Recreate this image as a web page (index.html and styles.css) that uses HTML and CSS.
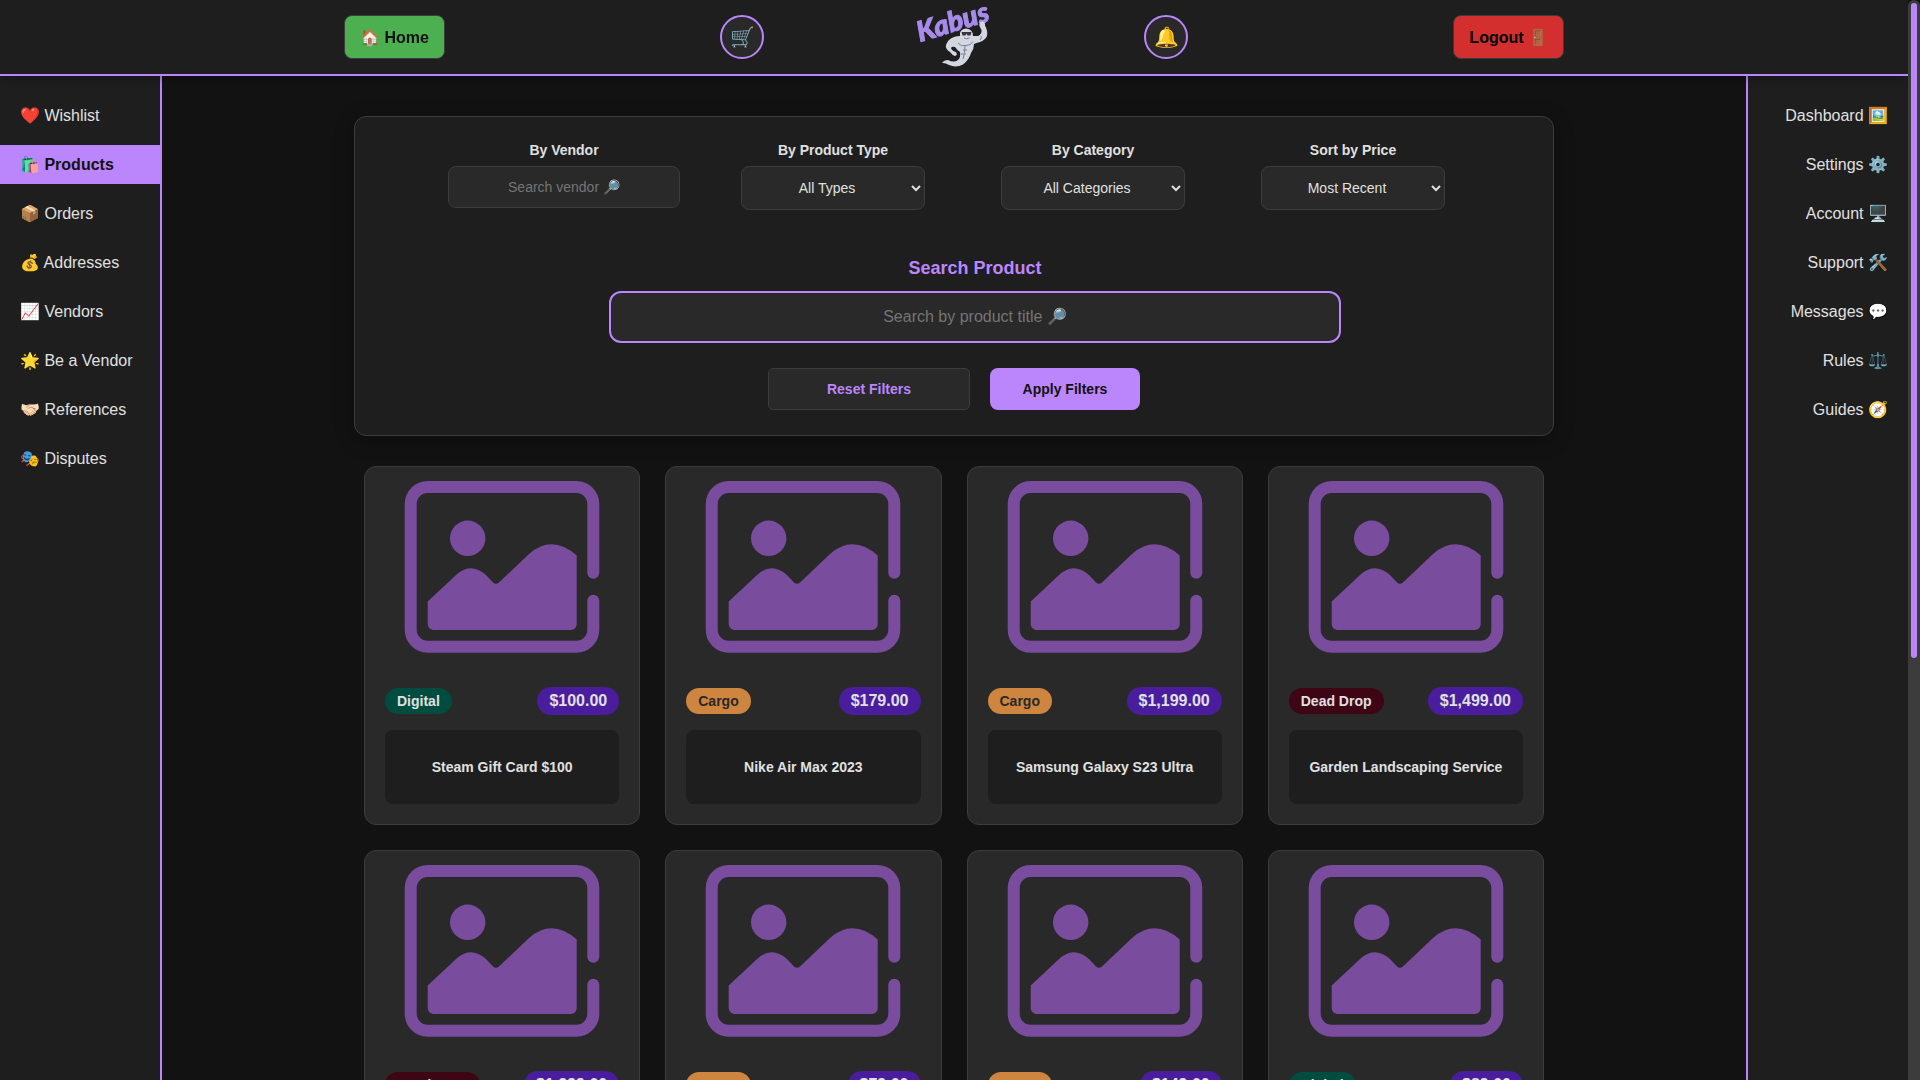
FILE: index.html
```html
<!DOCTYPE html>
<html lang="en">
<head>
<meta charset="utf-8">
<title>Kabus - Products</title>
<link rel="stylesheet" href="styles.css">
</head>
<body>
<svg class="sprite" aria-hidden="true">
  <symbol id="placeholder" viewBox="0 0 200 200">
    <path fill="none" stroke="currentColor" stroke-width="12" stroke-linecap="round" d="M191.300 105.800V37a17 17 0 0 0-17-17H25.700a17 17 0 0 0-17 17v125.700a17 17 0 0 0 17 17h148.600a17 17 0 0 0 17-17V133.800"/>
    <circle fill="currentColor" cx="65.700" cy="71.300" r="17.700"/>
    <path fill="currentColor" d="M25.700 134.500 53 109Q68 94 84 108L91 115.500Q94 118 97 115.500L127 87Q150 67 174.700 88.500V157.500Q174 162 169.500 163H31Q26.500 162 25.700 157.500Z"/>
  </symbol>
</svg>
<div class="window">
<div class="page">
  <header class="topbar">
    <nav class="topbar-inner">
      <a class="btn-home" href="#">🏠 Home</a>
      <div class="topbar-center">
        <a class="round" href="#" aria-label="Cart">🛒</a>
        <a class="logo" href="#" aria-label="Kabus">
          <svg viewBox="0 0 80 74" width="80" height="74">
            <text class="logo-text" transform="translate(6 42) rotate(-17)">Kabus</text>
            <g class="ghost">
              <path d="M46 36Q45 29 52 28.500Q59 29 59 36Q62 36 64 36Q68 34 67.500 30L65.500 26Q64.500 22 68 21.500Q71.500 21.500 71 25.500Q74 31 73 36Q71 40 66 42Q62 43 60 44Q60 49 57 53Q55 60 49 64.500Q42 68 35 65Q31 62.500 28 63Q30 60 34 60Q40 63 44 60Q47 57 46 52Q43 50 41 47Q38 46 37 48Q38 51 42 52Q44 55 41 56Q38 55 36 52Q31 49 32 45Q34 39 40 37Q43 36 46 36Z"/>
              <path class="ghost-line" d="M48.500 33l3 .5M54 34l3-.5M50 38q3 1.500 5.500 0M44 43q3 4 8 2.500M52 45.500q5 0 7-4M51 46q0 7-2 13M49 50h4M47 54l5 0M66 40q2-2 1-4"/>
              <path class="ghost-mask" d="M47.500 32h10l-1 3.500h-3l-1-2-1 2h-3z"/>
            </g>
          </svg>
        </a>
        <a class="round" href="#" aria-label="Notifications">🔔</a>
      </div>
      <button class="btn-logout" type="button">Logout 🚪</button>
    </nav>
  </header>
  <div class="columns">
    <nav class="side side-left">
      <a href="#">❤️ Wishlist</a>
      <a class="active" href="#">🛍️ Products</a>
      <a href="#">📦 Orders</a>
      <a href="#">💰 Addresses</a>
      <a href="#">📈 Vendors</a>
      <a href="#">🌟 Be a Vendor</a>
      <a href="#">🤝🏻 References</a>
      <a href="#">🎭 Disputes</a>
    </nav>
    <main class="content">
      <form class="filters">
        <div class="fields">
          <div class="field"><label for="vendor">By Vendor</label><input id="vendor" type="text" placeholder="Search vendor 🔎"></div>
          <div class="field"><label for="type">By Product Type</label><select id="type"><option>All Types</option></select></div>
          <div class="field"><label for="category">By Category</label><select id="category"><option>All Categories</option></select></div>
          <div class="field"><label for="sort">Sort by Price</label><select id="sort"><option>Most Recent</option></select></div>
        </div>
        <div class="search">
          <label for="title">Search Product</label>
          <input id="title" type="text" placeholder="Search by product title 🔎">
        </div>
        <div class="actions">
          <button class="reset" type="reset">Reset Filters</button>
          <button class="apply" type="submit">Apply Filters</button>
        </div>
      </form>
      <section class="products">
        <article class="card"><svg class="thumb"><use href="#placeholder"/></svg><div class="meta"><span class="tag digital">Digital</span><span class="price">$100.00</span></div><h3>Steam Gift Card $100</h3></article>
        <article class="card"><svg class="thumb"><use href="#placeholder"/></svg><div class="meta"><span class="tag cargo">Cargo</span><span class="price">$179.00</span></div><h3>Nike Air Max 2023</h3></article>
        <article class="card"><svg class="thumb"><use href="#placeholder"/></svg><div class="meta"><span class="tag cargo">Cargo</span><span class="price">$1,199.00</span></div><h3>Samsung Galaxy S23 Ultra</h3></article>
        <article class="card"><svg class="thumb"><use href="#placeholder"/></svg><div class="meta"><span class="tag deaddrop">Dead Drop</span><span class="price">$1,499.00</span></div><h3>Garden Landscaping Service</h3></article>
        <article class="card"><svg class="thumb"><use href="#placeholder"/></svg><div class="meta"><span class="tag deaddrop">Dead Drop</span><span class="price">$1,299.00</span></div></article>
        <article class="card"><svg class="thumb"><use href="#placeholder"/></svg><div class="meta"><span class="tag cargo">Cargo</span><span class="price">$79.00</span></div></article>
        <article class="card"><svg class="thumb"><use href="#placeholder"/></svg><div class="meta"><span class="tag cargo">Cargo</span><span class="price">$149.00</span></div></article>
        <article class="card"><svg class="thumb"><use href="#placeholder"/></svg><div class="meta"><span class="tag digital">Digital</span><span class="price">$89.00</span></div></article>
      </section>
    </main>
    <nav class="side side-right">
      <a href="#">Dashboard 🖼️</a>
      <a href="#">Settings ⚙️</a>
      <a href="#">Account 🖥️</a>
      <a href="#">Support 🛠️</a>
      <a href="#">Messages 💬</a>
      <a href="#">Rules ⚖️</a>
      <a href="#">Guides 🧭</a>
    </nav>
  </div>
</div>
<div class="scrollbar" aria-hidden="true"><div class="scrollbar-thumb"></div></div>
</div>
</body>
</html>
```
FILE: styles.css
```css
* { box-sizing: border-box; }
body {
  margin: 0;
  background: #121212;
  color: #e0e0e0;
  font-family: "Liberation Sans", Arial, sans-serif;
  font-size: 16px;
}
a { color: inherit; text-decoration: none; }
input, select, button { font: inherit; color: inherit; }
.sprite { display: none; }

.window { display: flex; height: 100vh; }
.page { flex: 1; min-width: 0; overflow-y: auto; scrollbar-width: none; }
.scrollbar { width: 12px; padding: 3px; border-radius: 6px 6px 0 0; background: #3c3c3c; }
.scrollbar-thumb { height: 61%; border-radius: 3px; background: #bb86fc; }

.topbar {
  position: sticky;
  top: 0;
  z-index: 2;
  background: #1e1e1e;
  border-bottom: 2px solid #bb86fc;
  box-shadow: 0 2px 10px rgba(0, 0, 0, 0.3);
}
.topbar-inner {
  display: grid;
  grid-template-columns: 1fr auto 1fr;
  align-items: center;
  max-width: 1220px;
  margin: 0 auto;
}
.topbar-center { display: flex; align-items: center; gap: 150px; }
.btn-home, .btn-logout {
  height: 44px;
  padding: 0 15px;
  border: 1px solid #3c3c3c;
  border-radius: 8px;
  font-weight: bold;
  line-height: 44px;
}
.btn-home { justify-self: start; background: #4caf50; color: #121212; }
.btn-logout { justify-self: end; background: #d32f2f; color: #000; }
.round {
  display: flex;
  align-items: center;
  justify-content: center;
  width: 44px;
  height: 44px;
  border: 2px solid #bb86fc;
  border-radius: 50%;
  background: #292929;
  font-size: 20px;
}
.logo svg { display: block; overflow: visible; }
.logo-text { font: italic 900 28px Lato, sans-serif; fill: #a78bea; stroke: #a78bea; stroke-width: 1; }
.ghost { fill: #d3d7e2; }
.ghost-line { fill: none; stroke: #7b8090; stroke-width: 1; }
.ghost-mask { fill: #33363f; }

.columns { display: grid; grid-template-columns: 162px 1fr 162px; min-height: 1694px; }
.side { display: flex; flex-direction: column; gap: 10px; padding: 20px 0; background: #1e1e1e; }
.side a { padding: 10px 20px; line-height: 19px; }
.side-left { border-right: 2px solid #bb86fc; }
.side-right { border-left: 2px solid #bb86fc; text-align: right; }
.side .active { background: #bb86fc; color: #121212; font-weight: bold; }

.content { width: 100%; max-width: 1200px; margin: 0 auto; padding: 40px 0; }
.filters {
  padding: 25px 20px;
  border: 1px solid #3c3c3c;
  border-radius: 12px;
  background: #1e1e1e;
  box-shadow: 0 4px 20px rgba(0, 0, 0, 0.3);
}
.fields { display: grid; grid-template-columns: 258px repeat(3, 240px); justify-content: center; gap: 20px; }
.field { display: flex; flex-direction: column; align-items: center; gap: 8px; font-size: 14px; }
.field label { font-weight: bold; line-height: 16px; }
.field input, .field select {
  border: 1px solid #3c3c3c;
  border-radius: 8px;
  background: #292929;
  text-align: center;
}
.field input { width: 232px; height: 42px; }
.field select { width: 184px; height: 44px; }
.search { display: flex; flex-direction: column; align-items: center; gap: 12px; margin-top: 48px; padding-left: 42px; }
.search label { color: #bb86fc; font-size: 18px; font-weight: bold; line-height: 21px; }
.search input {
  width: 732px;
  height: 52px;
  border: 2px solid #bb86fc;
  border-radius: 12px;
  background: #292929;
  text-align: center;
}
.actions { display: flex; justify-content: center; gap: 20px; margin-top: 25px; }
.actions button { height: 42px; font-size: 14px; font-weight: bold; }
.reset { width: 202px; border: 1px solid #3c3c3c; border-radius: 5px; background: #292929; color: #bb86fc; }
.apply { width: 150px; border: 0; border-radius: 8px; background: #bb86fc; color: #121212; }

.products { display: grid; grid-template-columns: repeat(4, 1fr); gap: 25px; padding: 30px 10px; }
.card {
  display: flex;
  flex-direction: column;
  min-height: 359px;
  border: 1px solid #3c3c3c;
  border-radius: 12px;
  background: #292929;
}
.thumb { width: 200px; height: 200px; align-self: center; color: #7a4c9e; }
.meta { display: flex; align-items: center; justify-content: space-between; padding: 20px 20px 15px; }
.tag, .price { padding: 5px 12px; border-radius: 15px; font-weight: bold; }
.tag { font-size: 14px; line-height: 16px; }
.price { background: #4a1d9e; line-height: 18px; }
.digital { background: #004d40; }
.cargo { background: #cd853f; color: #292929; }
.deaddrop { background: #3e0514; }
.card h3 {
  display: flex;
  align-items: center;
  justify-content: center;
  min-height: 74px;
  margin: 0 20px 20px;
  border-radius: 8px;
  background: #1e1e1e;
  font-size: 14px;
}
```
